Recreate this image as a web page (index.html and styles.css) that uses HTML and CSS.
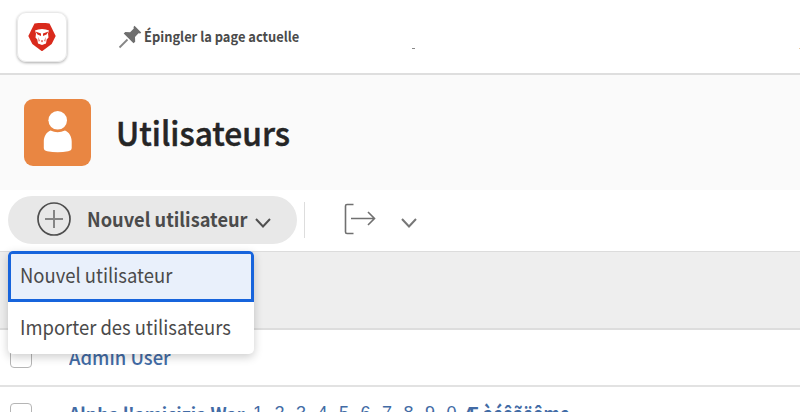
FILE: index.html
```html
<!DOCTYPE html>
<html lang="fr">
<head>
<meta charset="utf-8">
<title>Utilisateurs</title>
<link rel="stylesheet" href="styles.css">
</head>
<body>
<header class="topbar">
  <div class="logo">
    <svg width="28" height="28" viewBox="0 0 28 28"><path d="M6.500 .500Q14-.8 21.500.5L27.700 13l-4 8L14 28.300 4.300 21 .3 13z" fill="#d92a1c"/><path d="M7 7.500q3-1.500 7-1.500t7 1.500l-1 3 .5 4-1.800 2-.7 4-4 1.500-4-1.500-.7-4-1.800-2 .5-4z" fill="#fff"/><path d="M7.500 8.500l5.500 2v2.500l-3.500-1.500zm13 0l-5.500 2v2.500l3.500-1.500zM12.800 17.500h2.400L14 19.500zM10.500 14l1.200 4-1 .5zm7 0l-1.200 4 1 .5z" fill="#d92a1c"/></svg>
  </div>
  <a class="pin">
    <svg width="24" height="24" viewBox="0 0 24 24"><path d="M16.500.7l6.700 6.700-1 1.200-1.700-.3-3.500 3.700.2 4.800-1.700 1.500-9.800-9.800L7.300 6.900l4.800.4 3.700-3.700-.3-1.700z" fill="#6e6e6e"/><path d="M9.500 14.500L1.500 22.500" stroke="#858585" stroke-width="1.800"/></svg>
    <span>Épingler la page actuelle</span>
  </a>
  <i class="tick"></i><i class="tick tick-end"></i>
</header>
<section class="title">
  <div class="avatar">
    <svg width="67" height="67" viewBox="0 0 67 67"><circle cx="33.700" cy="21.300" r="9.300" fill="#fff"/><path d="M26.500 31.500Q33.500 35 41 31.500c4 1.500 6.700 6 6.700 11v6.500c0 2-1.500 2.700-3.500 3.200q-10.500 2-21 0c-2-.5-3.400-1.200-3.400-3.200v-6.500c0-5 2.700-9.500 6.700-11z" fill="#fff"/></svg>
  </div>
  <h1>Utilisateurs</h1>
</section>
<nav class="toolbar">
  <button class="new">
    <svg width="34" height="34" viewBox="0 0 34 34" fill="none"><circle cx="17" cy="17" r="16" stroke="#4e4e4e" stroke-width="1.700"/><path d="M8 17h18M17 8v18" stroke="#858585" stroke-width="2"/></svg>
    <span>Nouvel utilisateur</span>
    <svg class="chev" width="16" height="10" viewBox="0 0 16 10"><path d="M1 1l7 7.500L15 1" fill="none" stroke="#505050" stroke-width="2"/></svg>
  </button>
  <i class="divider"></i>
  <svg class="export" width="32" height="32" viewBox="0 0 32 32" fill="none" stroke="#707070" stroke-width="1.600"><path d="M9.500 1.500H3q-1.500 0-1.500 1.500v26q0 1.500 1.500 1.500h6.500"/><path d="M7 15.500h23M24 9l6.500 6.500L24 22"/></svg>
  <svg class="chev chev-export" width="16" height="10" viewBox="0 0 16 10"><path d="M1 1l7 7.500L15 1" fill="none" stroke="#777" stroke-width="2"/></svg>
</nav>
<main>
  <div class="filters"></div>
  <div class="row"><i class="box"></i><a class="name admin">Admin User</a></div>
  <div class="row last"><i class="box"></i><a class="name alpha">Alpha l'amicizia War</a><a class="digits">1 2 3 4 5 6 7 8 9 0</a><a class="name accents">Æ àéôãëôme</a></div>
</main>
<div class="menu">
  <div class="item selected"><span>Nouvel utilisateur</span></div>
  <div class="item"><span class="import">Importer des utilisateurs</span></div>
</div>
</body>
</html>
```
FILE: styles.css
```css
* { box-sizing: border-box; }
body { margin: 0; width: 800px; height: 412px; overflow: hidden; position: relative; background: #fff; font-family: "Noto Sans CJK JP", "Noto Sans", sans-serif; color: #4b4b4b; }
svg { display: block; flex: none; }
span, a, h1 { white-space: nowrap; }
.topbar { height: 75px; border-bottom: 2px solid #dedede; display: flex; position: relative; }
.logo { width: 50px; height: 50px; margin: 12px 0 0 17px; border-radius: 9px; border: 1px solid #e9e9e9; box-shadow: 0 1px 3px #0005; display: grid; place-items: center; flex: none; }
.pin { display: flex; height: 24px; margin: 25px 0 0 51px; font-size: 14px; line-height: 22px; font-weight: 700; }
.pin span { margin-left: 2px; transform: scaleX(.92); transform-origin: left; }
.tick { position: absolute; left: 412px; top: 48px; width: 3px; height: 1px; background: #888; }
.tick-end { left: 799px; background: #eaca9f; }
.title { height: 115px; background: #fafafa; display: flex; }
.avatar { width: 67px; height: 67px; margin: 24px 0 0 24px; border-radius: 9px; background: #e98642; flex: none; }
h1 { margin: 36px 0 0 25px; font-size: 33px; line-height: 42px; font-weight: 500; color: #252525; -webkit-text-stroke: 0.500px #252525; transform: scaleX(.96); transform-origin: left; }
.toolbar { height: 62px; border-bottom: 1px solid #dcdcdc; display: flex; }
.new { width: 289px; height: 48px; margin: 6px 0 0 8px; padding: 0 0 0 29px; border: 0; border-radius: 24px; background: #e8e8e8; display: flex; align-items: flex-start; font-family: inherit; font-size: 19.5px; font-weight: 700; line-height: 46px; color: #4b4b4b; flex: none; }
.new > svg:first-child { margin-top: 6px; }
.new span { margin-left: 16px; width: 162px; text-align: left; transform: scaleX(.935); transform-origin: left; }
.new .chev { margin: 22px 0 0 6px; }
.divider { width: 1px; height: 36px; margin: 12px 0 0 7px; background: #ddd; }
.export { margin: 13px 0 0 39px; }
.chev-export { margin: 28px 0 0 25px; }
.filters { height: 78px; background: #eee; border-bottom: 2px solid #ddd; }
.row { height: 57px; display: flex; border-bottom: 2px solid #e2e2e2; color: #426ba5; font-size: 19px; line-height: 24px; }
.row.last { height: 26px; border: 0; overflow: hidden; }
.box { width: 22px; height: 22px; margin: 16px 0 0 10px; border: 1px solid #b5b5b5; border-radius: 4px; flex: none; }
.name { margin: 15px 0 0 37px; font-weight: 500; }
.admin { transform: scaleX(.97); transform-origin: left; }
.last .name { margin-top: 14px; font-weight: 700; }
.alpha { width: 175px; font-size: 18px; transform: scaleX(.98); transform-origin: left; }
.last .digits { margin: 14px 0 0 9px; width: 210px; font-family: "Liberation Sans", sans-serif; font-size: 18px; word-spacing: 6.500px; }
.last .accents { margin-left: 0; transform: scaleX(.89); transform-origin: left; }
.menu { position: absolute; left: 8px; top: 251px; width: 246px; height: 103px; background: #fff; border-radius: 5px; box-shadow: 0 3px 10px #0003; overflow: hidden; font-size: 20px; color: #4a4a4a; }
.item { height: 51px; padding-left: 12px; line-height: 50px; }
.item span { display: inline-block; transform: scaleX(.922); transform-origin: left; }
.selected { border: 3px solid #1764dc; border-radius: 4px 4px 0 0; background: #e9f0fb; padding-left: 9px; line-height: 42px; }
```
